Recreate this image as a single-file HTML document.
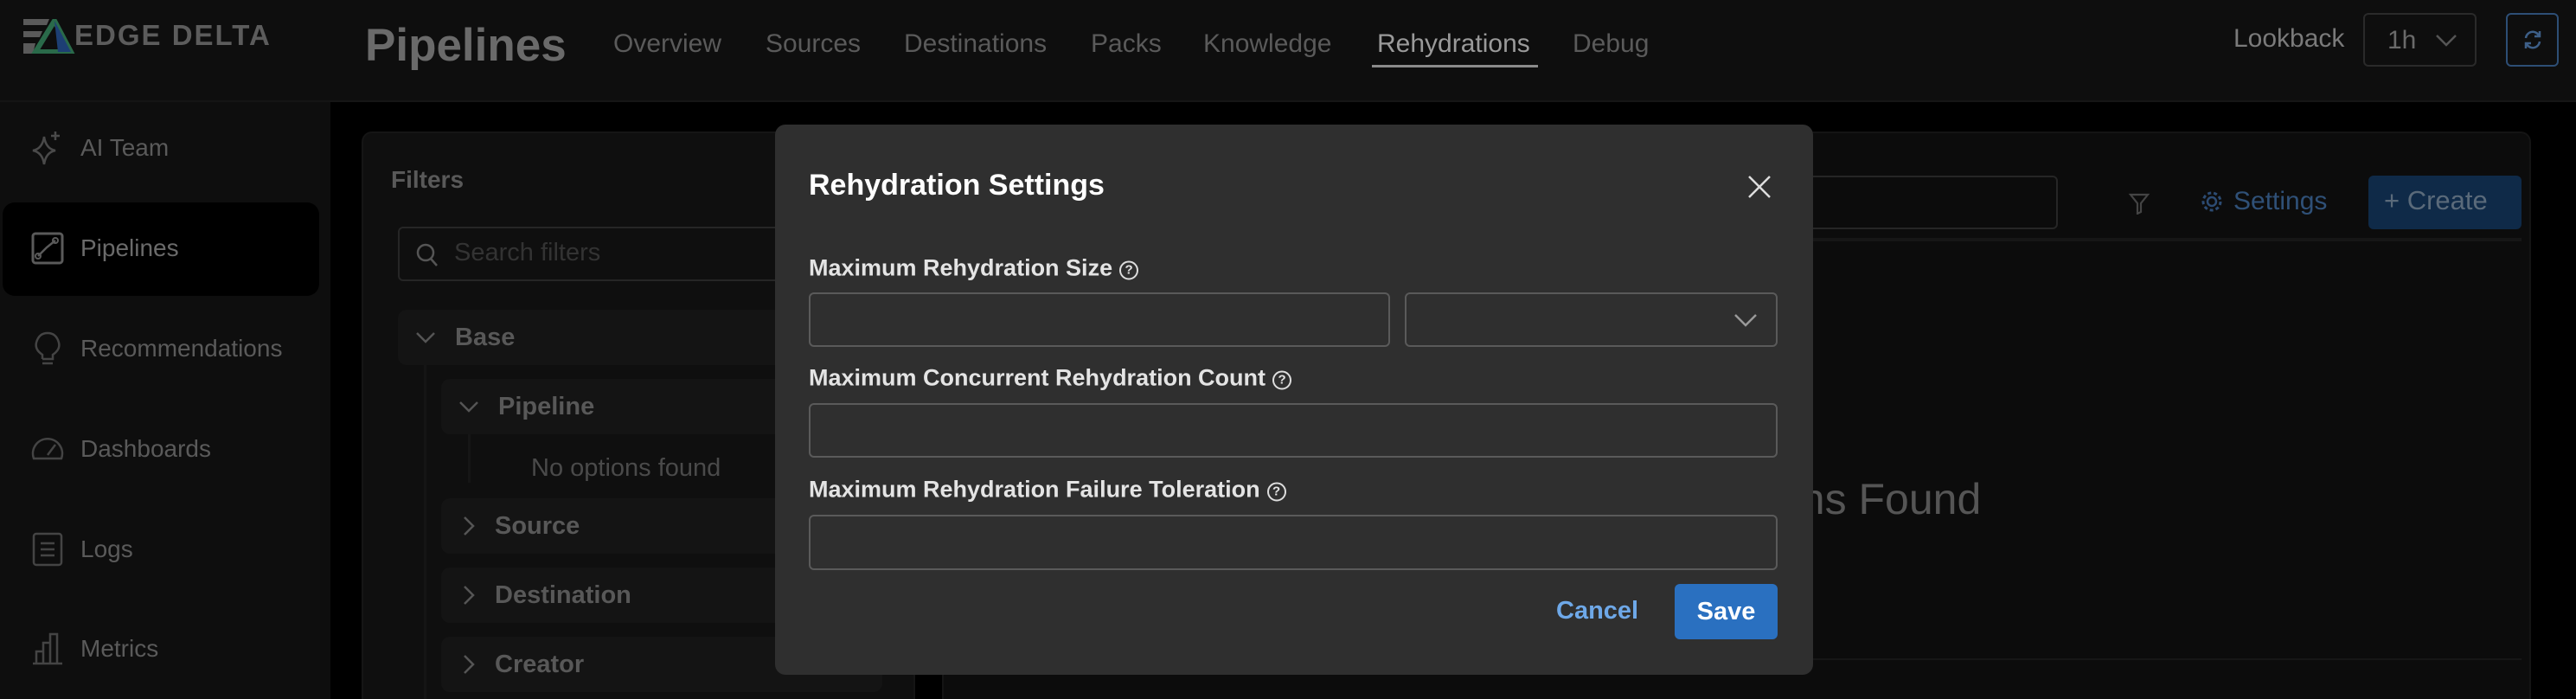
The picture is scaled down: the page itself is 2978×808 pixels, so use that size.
<!DOCTYPE html>
<html><head><meta charset="utf-8"><style>
*{box-sizing:border-box;margin:0;padding:0}
html,body{width:2978px;height:808px;overflow:hidden}
body{background:#000;font-family:"Liberation Sans",sans-serif;position:relative}
.a{position:absolute}
.hdr{left:0;top:0;width:2978px;height:118px;background:#0e0e0e;border-bottom:2px solid #151515}
.side{left:0;top:118px;width:382px;height:690px;background:#0e0e0e}
.nav{top:34px;font-size:30px;color:#5a5a5a}
.si{left:93px;font-size:28px;color:#5a5a5a;transform:translateY(-50%)}
.ic{left:34px;width:42px;height:42px;transform:translateY(-50%)}
.row{background:#141414;border-radius:10px;height:64px;font-size:29px;font-weight:bold;color:#585858;display:flex;align-items:center}
.lbl{left:935px;font-size:27px;font-weight:bold;color:#e4e4e4;transform:translateY(-50%)}
.inp{border:2px solid #5a5a5a;border-radius:6px;background:#2f2f2f}
.q{display:inline-block;width:22px;height:22px;border:2px solid #ddd;border-radius:50%;font-size:15px;text-align:center;line-height:18px;vertical-align:2px;margin-left:8px}
</style></head><body>
<div class="a hdr"></div>
<div class="a side"></div>
<svg class="a" style="left:27px;top:22px" width="60" height="40" viewBox="0 0 60 40">
<polygon points="0,0 30,0 27,7 0,7" fill="#5a5a5a"/><polygon points="0,14 22,14 19,21 0,21" fill="#5a5a5a"/><polygon points="0,28 14,28 11,40 0,40" fill="#5a5a5a"/>
<polygon points="36,2 55,38 14,38" fill="none" stroke="#2a6a4a" stroke-width="6"/><polygon points="36,2 55,38 40,38" fill="#1d3f74"/>
</svg>
<div class="a" style="left:86px;top:22px;font-size:33px;color:#5c5c5c;letter-spacing:2px;font-weight:bold">EDGE DELTA</div>
<div class="a" style="left:422px;top:22px;font-size:53px;font-weight:bold;color:#6a6a6a">Pipelines</div>
<div class="a nav" style="left:709px">Overview</div>
<div class="a nav" style="left:885px">Sources</div>
<div class="a nav" style="left:1045px">Destinations</div>
<div class="a nav" style="left:1261px">Packs</div>
<div class="a nav" style="left:1391px">Knowledge</div>
<div class="a nav" style="left:1592px;color:#9a9a9a">Rehydrations</div>
<div class="a" style="left:1586px;top:75px;width:192px;height:3px;background:#8a8a8a"></div>
<div class="a nav" style="left:1818px">Debug</div>
<div class="a" style="left:2582px;top:28px;font-size:30px;color:#7a7a7a">Lookback</div>
<div class="a" style="left:2732px;top:15px;width:131px;height:62px;border:2px solid #2a2a2a;border-radius:6px"></div>
<div class="a" style="left:2760px;top:30px;font-size:30px;color:#6a6a6a">1h</div>
<svg class="a" style="left:2815px;top:38px" width="26" height="16"><path d="M2 3 L13 14 L24 3" stroke="#555" stroke-width="2.5" fill="none"/></svg>
<div class="a" style="left:2897px;top:15px;width:61px;height:62px;border:2px solid #2d4e75;border-radius:6px"></div>
<svg class="a" style="left:2914px;top:32px" width="28" height="28" viewBox="0 0 28 28"><path d="M6 12 A8 8 0 0 1 21 9 M22 4 V10 H16 M22 16 A8 8 0 0 1 7 19 M6 24 V18 H12" stroke="#3d5f88" stroke-width="2.5" fill="none"/></svg>
<div class="a" style="left:3px;top:234px;width:366px;height:108px;background:#000;border-radius:14px"></div>
<svg class="a ic" style="top:171px" viewBox="0 0 42 42"><path d="M17 8 Q19 22 30 24 Q19 26 17 40 Q15 26 4 24 Q15 22 17 8Z M30 2 V12 M25 7 H35" stroke="#4a4a4a" stroke-width="2.5" fill="none"/></svg>
<div class="a si" style="top:171px">AI Team</div>
<svg class="a ic" style="top:287px" viewBox="0 0 42 42"><rect x="4" y="4" width="34" height="34" rx="3" stroke="#5a5a5a" stroke-width="3" fill="none"/><path d="M10 30 L20 20 L30 12" stroke="#5a5a5a" stroke-width="2.5" fill="none"/><circle cx="10" cy="30" r="3" stroke="#5a5a5a" stroke-width="2" fill="none"/><circle cx="30" cy="12" r="3" stroke="#5a5a5a" stroke-width="2" fill="none"/></svg>
<div class="a si" style="top:287px;color:#6a6a6a">Pipelines</div>
<svg class="a ic" style="top:403px" viewBox="0 0 42 42"><path d="M15 38 H27 M15 33 V28 Q6 22 8 14 Q11 3 21 3 Q31 3 34 14 Q36 22 27 28 V33 H15" stroke="#444" stroke-width="2.5" fill="none"/></svg>
<div class="a si" style="top:403px">Recommendations</div>
<svg class="a ic" style="top:519px" viewBox="0 0 42 42"><path d="M5 32 A17 17 0 1 1 37 32 Z M21 28 L30 16" stroke="#444" stroke-width="2.5" fill="none"/></svg>
<div class="a si" style="top:519px">Dashboards</div>
<svg class="a ic" style="top:635px" viewBox="0 0 42 42"><rect x="5" y="3" width="32" height="36" rx="3" stroke="#444" stroke-width="2.5" fill="none"/><path d="M13 14 H29 M13 21 H29 M13 28 H29" stroke="#444" stroke-width="2.5"/></svg>
<div class="a si" style="top:635px">Logs</div>
<svg class="a ic" style="top:750px" viewBox="0 0 42 42"><path d="M4 38 H38 M8 38 V24 H16 V38 M16 38 V14 H24 V38 M24 38 V4 H32 V38" stroke="#444" stroke-width="2.5" fill="none"/></svg>
<div class="a si" style="top:750px">Metrics</div>
<div class="a" style="left:418px;top:152px;width:640px;height:656px;background:#0f0f0f;border:2px solid #151515;border-bottom:none;border-radius:12px 12px 0 0"></div>
<div class="a" style="left:452px;top:192px;font-size:28px;font-weight:bold;color:#595959">Filters</div>
<div class="a" style="left:460px;top:262px;width:598px;height:63px;border:2px solid #262626;border-radius:6px"></div>
<svg class="a" style="left:480px;top:280px" width="28" height="30"><circle cx="12" cy="12" r="9" stroke="#555" stroke-width="2.5" fill="none"/><path d="M18 19 L25 27" stroke="#555" stroke-width="2.5"/></svg>
<div class="a" style="left:525px;top:276px;font-size:29px;color:#333">Search filters</div>
<div class="a row" style="left:460px;top:358px;width:560px">
<svg style="margin:0 22px 0 20px" width="24" height="16"><path d="M2 3 L12 13 L22 3" stroke="#555" stroke-width="2.5" fill="none"/></svg>Base</div>
<div class="a" style="left:490px;top:422px;width:3px;height:386px;background:#151515"></div>
<div class="a row" style="left:510px;top:438px;width:510px">
<svg style="margin:0 22px 0 20px" width="24" height="16"><path d="M2 3 L12 13 L22 3" stroke="#555" stroke-width="2.5" fill="none"/></svg>Pipeline</div>
<div class="a" style="left:541px;top:502px;width:3px;height:56px;background:#161616"></div>
<div class="a" style="left:614px;top:525px;font-size:29px;color:#4a4a4a">No options found</div>
<div class="a row" style="left:510px;top:576px;width:510px"><svg style="margin:0 22px 0 24px" width="16" height="24"><path d="M3 2 L13 12 L3 22" stroke="#555" stroke-width="2.5" fill="none"/></svg>Source</div>
<div class="a row" style="left:510px;top:656px;width:510px"><svg style="margin:0 22px 0 24px" width="16" height="24"><path d="M3 2 L13 12 L3 22" stroke="#555" stroke-width="2.5" fill="none"/></svg>Destination</div>
<div class="a row" style="left:510px;top:736px;width:510px"><svg style="margin:0 22px 0 24px" width="16" height="24"><path d="M3 2 L13 12 L3 22" stroke="#555" stroke-width="2.5" fill="none"/></svg>Creator</div>
<div class="a" style="left:1089px;top:152px;width:1837px;height:656px;background:#0c0c0c;border:2px solid #141414;border-bottom:none;border-radius:12px 12px 0 0"></div>
<div class="a" style="left:1100px;top:203px;width:1279px;height:62px;border:2px solid #262626;border-radius:6px"></div>
<svg class="a" style="left:2460px;top:222px" width="26" height="26"><path d="M3 3 H23 L15 13 V23 L11 25 V13 Z" stroke="#444" stroke-width="2.2" fill="none"/></svg>
<svg class="a" style="left:2543px;top:219px" width="28" height="28" viewBox="0 0 28 28"><circle cx="14" cy="14" r="5" stroke="#2c4b72" stroke-width="2.5" fill="none"/><circle cx="14" cy="14" r="10" stroke="#2c4b72" stroke-width="3" stroke-dasharray="4 3" fill="none"/></svg>
<div class="a" style="left:2582px;top:216px;font-size:30px;color:#2f5077">Settings</div>
<div class="a" style="left:2738px;top:203px;width:177px;height:62px;background:#0f2a48;border-radius:6px"></div>
<div class="a" style="left:2756px;top:214px;font-size:31px;color:#5a6a7a">+ Create</div>
<div class="a" style="left:1100px;top:275px;width:1815px;height:4px;background:#161616"></div>
<div class="a" style="left:1840px;top:548px;font-size:50px;color:#555">Rehydrations Found</div>
<div class="a" style="left:1100px;top:761px;width:1815px;height:2px;background:#161616"></div>
<div class="a" style="left:896px;top:144px;width:1200px;height:636px;background:#2f2f2f;border-radius:12px"></div>
<div class="a" style="left:935px;top:195px;font-size:34px;font-weight:bold;color:#fff">Rehydration Settings</div>
<svg class="a" style="left:2019px;top:201px" width="30" height="30"><path d="M3 3 L27 27 M27 3 L3 27" stroke="#ddd" stroke-width="2.5"/></svg>
<div class="a lbl" style="top:310px">Maximum Rehydration Size<span class="q">?</span></div>
<div class="a inp" style="left:935px;top:338px;width:672px;height:63px"></div>
<div class="a inp" style="left:1624px;top:338px;width:431px;height:63px"></div>
<svg class="a" style="left:2003px;top:360px" width="30" height="20"><path d="M3 4 L15 16 L27 4" stroke="#999" stroke-width="2.5" fill="none"/></svg>
<div class="a lbl" style="top:437px">Maximum Concurrent Rehydration Count<span class="q">?</span></div>
<div class="a inp" style="left:935px;top:466px;width:1120px;height:63px"></div>
<div class="a lbl" style="top:566px">Maximum Rehydration Failure Toleration<span class="q">?</span></div>
<div class="a inp" style="left:935px;top:595px;width:1120px;height:64px"></div>
<div class="a" style="left:1799px;top:690px;font-size:29px;color:#6ea8e8;font-weight:bold">Cancel</div>
<div class="a" style="left:1936px;top:675px;width:119px;height:64px;background:#2a70c0;border-radius:6px;color:#fff;font-size:29px;font-weight:bold;text-align:center;line-height:64px">Save</div>
</body></html>
